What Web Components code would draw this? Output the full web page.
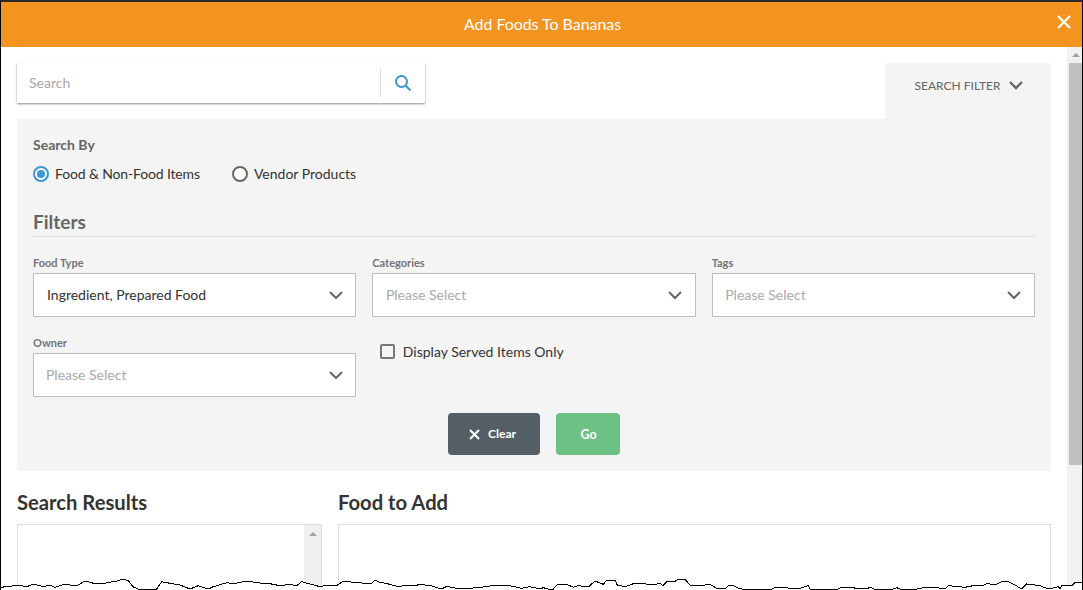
<!DOCTYPE html>
<html>
<head>
<meta charset="utf-8">
<title>Add Foods To Bananas</title>
<style>
html, body { margin: 0; padding: 0; height: 100%; overflow: hidden; background: #fff; }
body { font-family: "Lato", sans-serif; }
</style>
</head>
<body>
<food-dialog heading="Add Foods To Bananas">
  <filter-panel>
    <search-box slot="search" placeholder="Search"></search-box>
    <radio-option checked style="letter-spacing:-.14px">Food &amp; Non-Food Items</radio-option>
    <radio-option>Vendor Products</radio-option>
  </filter-panel>
</food-dialog>

<script>
const chevron = `<svg width="14" height="9" viewBox="0 0 14 9" fill="none" stroke="currentColor" stroke-width="2"><path d="M1 1l6 6 6-6"/></svg>`

class FoodDialog extends HTMLElement {
    constructor() {
        super()
        this.attachShadow({ mode: 'open' })
    }
    connectedCallback() {
        this.shadowRoot.innerHTML = `
        <style>
            :host { display: block; position: relative; width: 1083px; height: 590px; overflow: hidden; box-sizing: border-box; border-left: 1px solid #000; border-right: 1px solid #000; border-top: 2px solid #2b2b2b; background: #fff; color: #333; }
            header { height: 45px; box-sizing: border-box; padding: 0 0 2px 2px; background: #f39420; color: #fff; font-size: 15.9px; display: flex; align-items: center; justify-content: center; position: relative; }
            header svg { position: absolute; right: 10px; top: 12px; }
            .scrap { position: absolute; top: -2px; height: 1px; background: repeating-linear-gradient(90deg, #8a8a8a 0 3px, #3a3a3a 3px 5px); }
            .wrap { display: flex; }
            main { flex: 1; padding: 16px 16px 0; min-width: 0; }
            .rail { width: 15px; background: #f1f1f1; height: 543px; display: flex; flex-direction: column; align-items: flex-end; position: relative; }
            .rail i { display: block; width: 0; height: 0; border: 4px solid transparent; border-top: 0; border-bottom: 4px solid #a3a3a3; margin: 6px 2px 6px 0; }
            .rail b { display: block; width: 13px; height: 402px; background: #c1c1c1; }
        </style>
        <header>${this.getAttribute('heading')}
            <span class="scrap" style="left:41px;width:94px"></span>
            <span class="scrap" style="left:150px;width:22px"></span>
            <svg width="16" height="16" viewBox="0 0 16 16" stroke="#fff" stroke-width="2.2" fill="none"><path d="M2 2l12 12M14 2L2 14"/></svg>
        </header>
        <div class="wrap">
            <main><slot></slot></main>
            <div class="rail"><i></i><b></b></div>
        </div>
        <torn-edge></torn-edge>`
    }
}

class SearchBox extends HTMLElement {
    constructor() {
        super()
        this.attachShadow({ mode: 'open' })
    }
    connectedCallback() {
        this.shadowRoot.innerHTML = `
        <style>
            :host { display: flex; width: 408px; height: 40px; background: #fff; box-shadow: 0 1px 2px rgba(0,0,0,.45); align-items: center; font-size: 14px; color: #a9a9a9; box-sizing: border-box; padding-left: 12px; }
            span { flex: 1; margin-bottom: 2px; }
            .btn { width: 44px; height: 28px; border-left: 1px solid #d8d8d8; display: flex; align-items: center; justify-content: center; }
        </style>
        <span>${this.getAttribute('placeholder')}</span>
        <div class="btn"><svg width="18" height="18" viewBox="0 0 18 18" fill="none" stroke="#3a97d3" stroke-width="2"><circle cx="7.5" cy="7.5" r="5.5"/><path d="M11.5 11.5l5 5"/></svg></div>`
    }
}

class RadioOption extends HTMLElement {
    constructor() {
        super()
        this.attachShadow({ mode: 'open' })
    }
    connectedCallback() {
        const on = this.hasAttribute('checked')
        this.shadowRoot.innerHTML = `
        <style>
            :host { display: inline-flex; align-items: center; gap: 6px; font-size: 14px; color: #333; }
            .dot { width: 16px; height: 16px; border-radius: 50%; box-sizing: border-box; border: 2px solid ${on ? '#3a97d3' : '#666'}; background: #fff; display: flex; align-items: center; justify-content: center; }
            .dot i { width: 8px; height: 8px; border-radius: 50%; background: #3a97d3; display: ${on ? 'block' : 'none'}; }
            .txt { margin-bottom: 2px; }
        </style>
        <span class="dot"><i></i></span><span class="txt"><slot></slot></span>`
    }
}

class SelectField extends HTMLElement {
    constructor() {
        super()
        this.attachShadow({ mode: 'open' })
    }
    connectedCallback() {
        const value = this.getAttribute('value')
        this.shadowRoot.innerHTML = `
        <style>
            :host { display: block; }
            label { display: block; font-size: 11px; font-weight: 700; color: #747474; height: 18px; line-height: 15px; }
            .box { height: 44px; box-sizing: border-box; border: 1px solid #bdbdbd; background: #fff; display: flex; align-items: center; justify-content: space-between; padding: 0 var(--rpad, 12.5px) 0 var(--pad, 12.6px); font-size: 14px; color: ${value ? '#333' : '#a9a9a9'}; }
            span { margin-bottom: 2px; }
            svg { color: #666; }
        </style>
        <label>${this.getAttribute('label')}</label>
        <div class="box"><span>${value || 'Please Select'}</span>${chevron}</div>`
    }
}

class FilterPanel extends HTMLElement {
    constructor() {
        super()
        this.attachShadow({ mode: 'open' })
    }
    connectedCallback() {
        this.shadowRoot.innerHTML = `
        <style>
            :host { display: block; }
            .top { display: flex; justify-content: space-between; align-items: flex-start; height: 56px; }
            .tab { width: 166px; height: 56px; background: #f4f4f4; border-radius: 3px 3px 0 0; display: flex; align-items: center; justify-content: center; gap: 9px; font-size: 12px; color: #666; box-sizing: border-box; padding: 0 0 12px 2px; }
            .tab svg { color: #666; stroke-width: 2.4; }
            .panel { background: #f4f4f4; height: 352px; padding: 16px 16px 0; box-sizing: border-box; }
            h4 { margin: 0; font-size: 14px; font-weight: 700; color: #666; line-height: 20px; }
            .radios { display: flex; gap: 32px; margin-top: 9px; height: 20px; align-items: center; }
            h3 { margin: 24px 0 0; font-size: 19px; font-weight: 700; color: #666; line-height: 28px; border-bottom: 1px solid #ddd; }
            .grid { display: grid; grid-template-columns: repeat(3, 1fr); column-gap: 16px; row-gap: 18px; margin-top: 18px; }
            .check { display: flex; align-items: center; gap: 7.5px; font-size: 14px; color: #333; padding: 8px 0 0 8px; align-self: start; }
            .check i { width: 15px; height: 15px; box-sizing: border-box; border: 2px solid #777; border-radius: 2px; background: #f6f6f6; }
            .actions { display: flex; justify-content: center; gap: 16px; margin-top: 16px; }
            .results { display: grid; grid-template-columns: 305px 713px; column-gap: 16px; margin-top: 17px; }
            h2 { margin: 0 0 8px; font-size: 20.2px; font-weight: 700; color: #333; line-height: 28px; }
            .list { height: 120px; border: 1px solid #ddd; box-sizing: border-box; position: relative; }
            .list.scroll::after { content: ''; position: absolute; top: 0; right: 0; bottom: 0; width: 17px; background: #f0f0f0; }
            .list.scroll::before { content: ''; position: absolute; z-index: 1; top: 7px; right: 4px; border: 4px solid transparent; border-top: 0; border-bottom: 4px solid #a3a3a3; }
        </style>
        <div class="top">
            <slot name="search"></slot>
            <div class="tab">SEARCH FILTER ${chevron}</div>
        </div>
        <section class="panel">
            <h4>Search By</h4>
            <div class="radios"><slot></slot></div>
            <h3>Filters</h3>
            <div class="grid">
                <select-field label="Food Type" value="Ingredient, Prepared Food" style="--pad:13px"></select-field>
                <select-field label="Categories"></select-field>
                <select-field label="Tags" style="--rpad:13.5px"></select-field>
                <select-field label="Owner" style="--pad:12px"></select-field>
                <div class="check"><i></i>Display Served Items Only</div>
            </div>
            <div class="actions">
                <action-button kind="clear">Clear</action-button>
                <action-button kind="go">Go</action-button>
            </div>
        </section>
        <div class="results">
            <div><h2>Search Results</h2><div class="list scroll"></div></div>
            <div><h2>Food to Add</h2><div class="list"></div></div>
        </div>`
    }
}

class ActionButton extends HTMLElement {
    constructor() {
        super()
        this.attachShadow({ mode: 'open' })
    }
    connectedCallback() {
        const clear = this.getAttribute('kind') == 'clear'
        this.shadowRoot.innerHTML = `
        <style>
            :host { display: inline-flex; align-items: center; justify-content: center; gap: 8px; height: 42px; width: ${clear ? 92 : 64}px; box-sizing: border-box; padding: 0 ${clear ? 3 : 0}px 0 ${clear ? 0 : 1}px; border-radius: 4px; background: ${clear ? '#545f66' : '#6cc285'}; color: #fff; font-size: ${clear ? 12 : 12.5}px; font-weight: 700; }
            span { margin-bottom: ${clear ? 2 : 0}px; }
        </style>
        ${clear ? '<svg width="11" height="11" viewBox="0 0 11 11" stroke="#fff" stroke-width="2" fill="none"><path d="M1 1l9 9M10 1l-9 9"/></svg>' : ''}<span><slot></slot></span>`
    }
}

// jagged line read off the zoomed crops, each piece is [x offset, [zoom px, zoom py]...]
const tornPieces = [
    [0, [0,68,15,65,45,62,60,60,78,66,100,57,130,65,150,60,165,67,195,57,210,60,235,60,255,48,285,56,315,56,320,52,345,50,370,42,385,47,400,66,415,72,470,72,485,50,510,55,540,60,570,72,595,62,625,72,640,65,680,53,700,56,740,48,780,54,810,56]],
    [270, [30,62,60,58,80,62,95,50,120,57,150,65,175,60,200,62,220,48,260,53,290,55,305,55,315,45,330,52,360,58,385,65,410,60,435,62,450,58,485,63,515,72,530,64,560,70,600,70,640,66,680,60,720,62,755,70,780,65,810,72]],
    [540, [10,68,25,72,40,72,50,60,80,58,100,67,115,62,145,66,165,48,190,58,200,46,225,46,232,60,255,65,280,56,310,56,340,60,360,55,368,62,380,50,405,50,410,45,435,43,450,60,480,62,510,58,530,70,555,72,565,62,580,62,595,70,610,73,695,73,705,67,740,67,750,72,780,70,805,62]],
    [810, [0,72,85,72,95,66,130,68,145,72,185,68,192,72,250,72,260,68,270,72,320,72,345,67,380,68,405,72,415,62,465,67,500,60,520,62,530,55,555,60,575,50,590,48,615,60,635,72,650,57,690,62,715,72,745,65,750,72,755,63,785,62,795,53,820,52]]
]

class TornEdge extends HTMLElement {
    constructor() {
        super()
        this.attachShadow({ mode: 'open' })
    }
    connectedCallback() {
        const pts = []
        tornPieces.forEach(([off, list]) => {
            for (let i = 0; i < list.length; i += 2) {
                pts.push((off + list[i] / 3).toFixed(1) + ',' + (565 + list[i + 1] / 3).toFixed(1))
            }
        })
        const line = pts.join(' ')
        this.shadowRoot.innerHTML = `
        <style>
            :host { display: block; position: absolute; left: -1px; top: -2px; width: 1083px; height: 590px; pointer-events: none; }
            svg { display: block; }
        </style>
        <svg width="1083" height="590" viewBox="0 0 1083 590">
            <polygon points="${line} 1083,591 0,591" fill="#fff"/>
            <polyline points="${line}" fill="none" stroke="#000" stroke-width="1" shape-rendering="crispEdges"/>
        </svg>`
    }
}

customElements.define('torn-edge', TornEdge)
customElements.define('action-button', ActionButton)
customElements.define('select-field', SelectField)
customElements.define('radio-option', RadioOption)
customElements.define('search-box', SearchBox)
customElements.define('filter-panel', FilterPanel)
customElements.define('food-dialog', FoodDialog)
</script>
</body>
</html>
